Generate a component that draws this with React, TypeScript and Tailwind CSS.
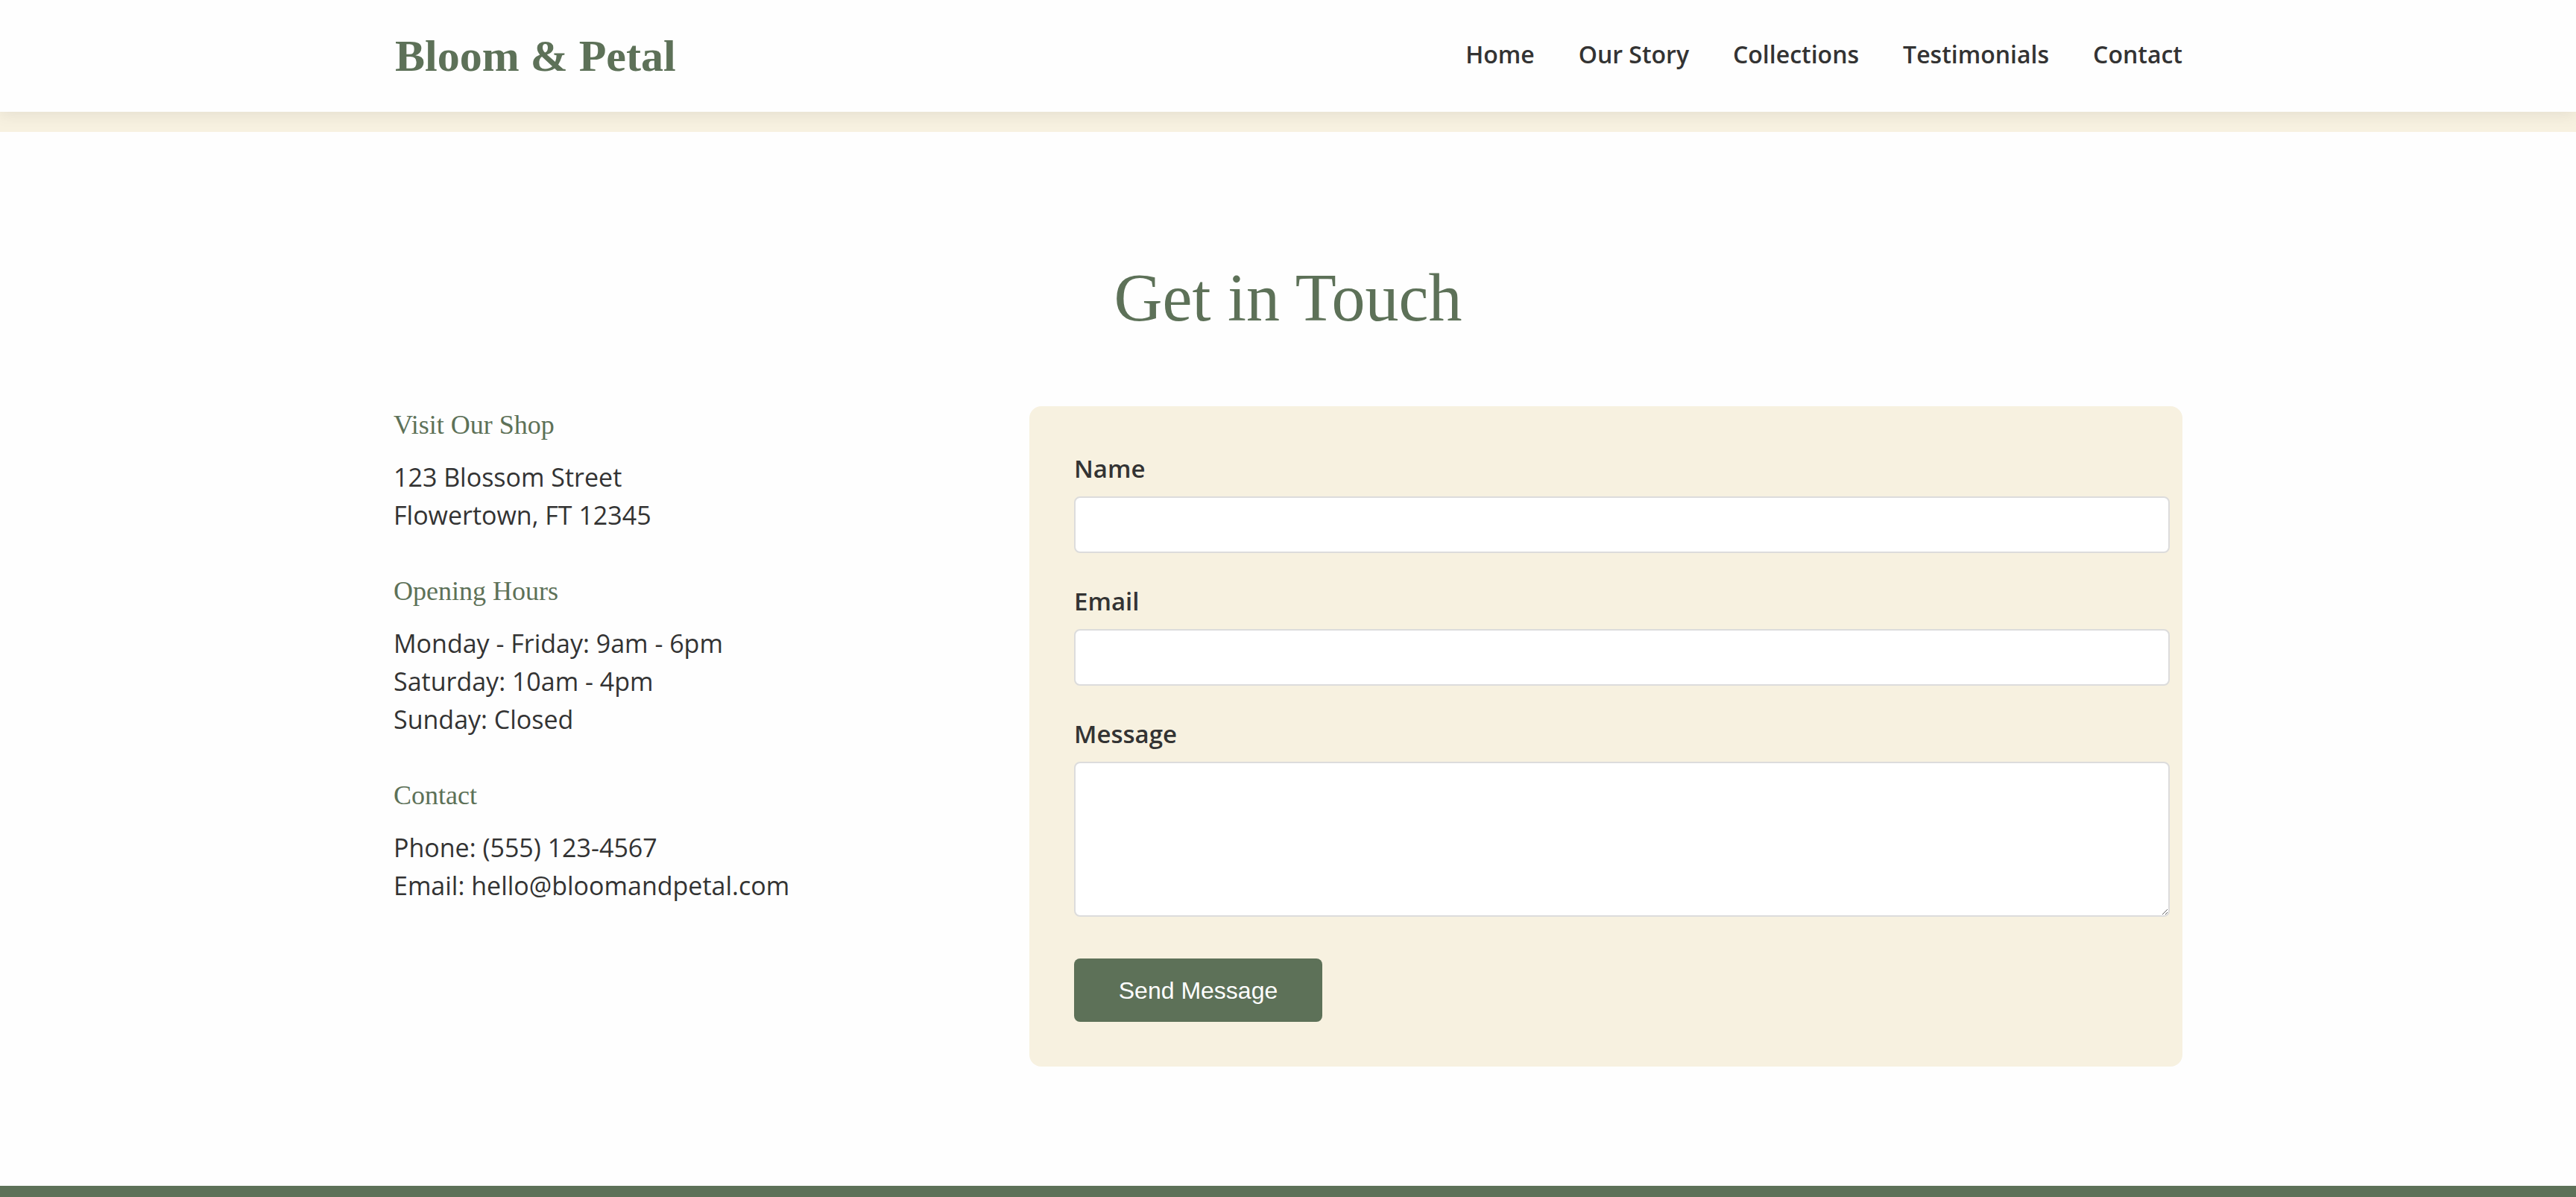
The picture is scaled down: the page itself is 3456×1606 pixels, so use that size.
import React from "react";

const navItems = ["Home", "Our Story", "Collections", "Testimonials", "Contact"];

function InfoBlock({ title, lines, last }: { title: string; lines: string[]; last?: boolean }) {
  return (
    <div className={last ? "" : "mb-[51px]"}>
      <h3 className="mb-[20px] font-['Liberation_Serif',serif] text-[36px] font-normal leading-[50px] text-[#5d7158]">
        {title}
      </h3>
      <p className="font-['Open_Sans',sans-serif] text-[34px] leading-[51px] text-[#333333]">
        {lines.map((l, i) => (
          <React.Fragment key={i}>
            {l}
            {i < lines.length - 1 && <br />}
          </React.Fragment>
        ))}
      </p>
    </div>
  );
}

function Field({ label, children, mb = "mb-[41px]" }: { label: string; children: React.ReactNode; mb?: string }) {
  return (
    <div className={mb}>
      <label className="mb-[13px] block font-['Open_Sans',sans-serif] text-[33px] font-semibold leading-[48px] text-[#333333]">
        {label}
      </label>
      {children}
    </div>
  );
}

export default function App() {
  return (
    <div className="min-h-screen bg-[#fefefe]">
      <header className="relative z-10 h-[150px] bg-[#fefefe] shadow-[0_4px_20px_rgba(0,0,0,0.08)]">
        <div className="mx-auto flex h-full w-[2400px] items-center justify-between">
          <div className="pl-[2px] font-['Liberation_Serif',serif] text-[60px] font-bold leading-none text-[#5d7158]">
            Bloom &amp; Petal
          </div>
          <nav className="flex gap-[59px] pb-[5px] font-['Open_Sans',sans-serif] text-[32px] font-semibold text-[#333333]">
            {navItems.map((n) => (
              <a key={n} className="leading-normal">
                {n}
              </a>
            ))}
          </nav>
        </div>
      </header>
      <div className="h-[27px] bg-[#f7f1e0]" />

      <section className="pb-[160px] pt-[160px]">
        <div className="mx-auto w-[2400px]">
          <h2 className="mb-[82px] text-center font-['Liberation_Serif',serif] text-[90px] font-normal leading-[126px] text-[#5d7158]">
            Get in Touch
          </h2>
          <div className="grid grid-cols-[773px_1547px] gap-[80px]">
            <div>
              <InfoBlock title="Visit Our Shop" lines={["123 Blossom Street", "Flowertown, FT 12345"]} />
              <InfoBlock
                title="Opening Hours"
                lines={["Monday - Friday: 9am - 6pm", "Saturday: 10am - 4pm", "Sunday: Closed"]}
              />
              <InfoBlock title="Contact" lines={["Phone: (555) 123-4567", "Email: hello@bloomandpetal.com"]} last />
            </div>
            <div className="h-[886px] rounded-[16px] bg-[#f7f1e0] p-[60px]">
              <Field label="Name">
                <input
                  type="text"
                  className="block h-[76px] w-[1470px] rounded-[8px] border-2 border-[#dcdcdc] bg-white px-[20px] font-['Open_Sans',sans-serif] text-[32px] outline-none"
                />
              </Field>
              <Field label="Email">
                <input
                  type="email"
                  className="block h-[76px] w-[1470px] rounded-[8px] border-2 border-[#dcdcdc] bg-white px-[20px] font-['Open_Sans',sans-serif] text-[32px] outline-none"
                />
              </Field>
              <Field label="Message" mb="mb-[56px]">
                <textarea className="block h-[208px] w-[1470px] resize-y rounded-[8px] border-2 border-[#dcdcdc] bg-white p-[20px] font-['Open_Sans',sans-serif] text-[32px] outline-none" />
              </Field>
              <button
                type="button"
                className="h-[85px] w-[333px] rounded-[8px] bg-[#5d7158] font-['Liberation_Sans',sans-serif] text-[32px] text-white"
              >
                Send Message
              </button>
            </div>
          </div>
        </div>
      </section>
      <footer className="h-[15px] bg-[#5d7158]" />
    </div>
  );
}
